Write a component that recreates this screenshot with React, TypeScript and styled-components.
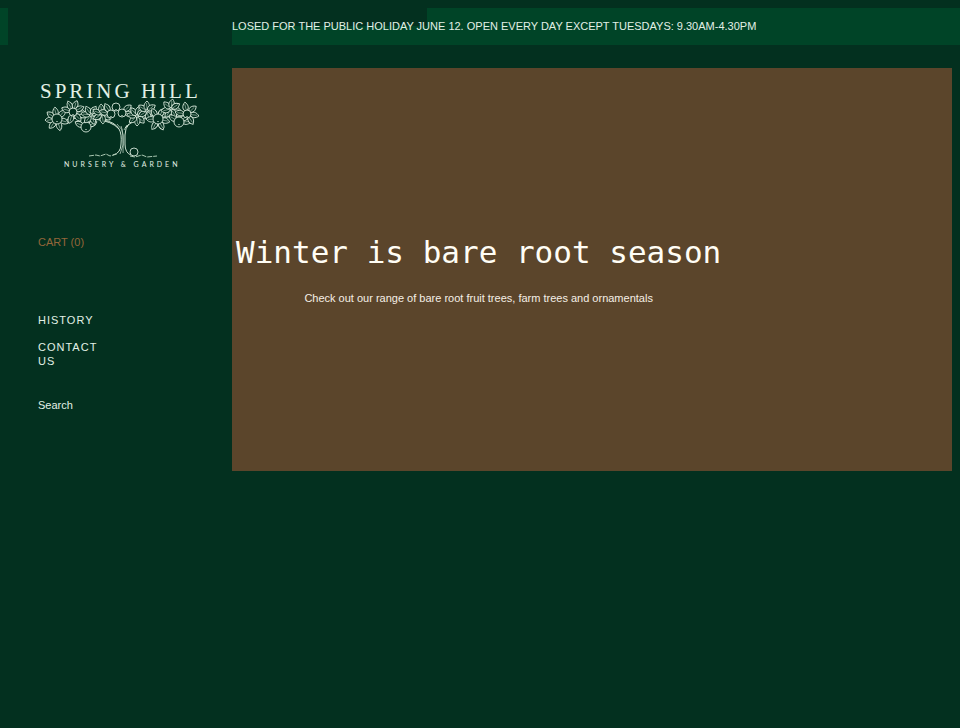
import React from "react";
import styled, { createGlobalStyle } from "styled-components";

const GlobalStyle = createGlobalStyle`
  * { box-sizing: border-box; }
  body {
    margin: 0;
    background: #03301f;
    color: #e2f0e6;
    font-family: "Liberation Sans", Arial, Helvetica, sans-serif;
    font-size: 11px;
  }
`;

const Page = styled.div`
  display: grid;
  grid-template-columns: 8px 224px minmax(0, 1fr);
  padding-top: 8px;
  min-height: 100vh;
`;

const Edge = styled.div`
  height: 37px;
  background: #004427;
`;

const Sidebar = styled.aside`
  display: flex;
  flex-direction: column;
  align-items: flex-start;
  padding: 70px 30px 0;
`;

const LogoLink = styled.a`
  display: block;
  height: 96px;
`;

const CartLink = styled.a`
  margin-top: 62px;
  color: #94663a;
  line-height: 12px;
  text-decoration: none;
`;

const Nav = styled.nav`
  display: flex;
  flex-direction: column;
  gap: 13px;
  width: 64px;
  margin-top: 65px;
`;

const NavLink = styled.a`
  color: inherit;
  line-height: 14px;
  letter-spacing: 1px;
  text-decoration: none;
`;

const SearchLink = styled.a`
  margin-top: 31px;
  color: inherit;
  line-height: 12px;
  text-decoration: none;
`;

const Content = styled.div`
  display: flex;
  flex-direction: column;
  gap: 23px;
`;

const Announcement = styled.div`
  height: 37px;
  background: linear-gradient(#03301f, #03301f) 0 0 / 195px 18px no-repeat, #004427;
  line-height: 37px;
  white-space: nowrap;
`;

const Hero = styled.main`
  margin-right: 8px;
  padding: 166px 0;
  background: #5b452b;
`;

const HeroCopy = styled.div`
  width: max-content;
  max-width: 100%;
  margin-left: 4px;
  text-align: center;
`;

const Title = styled.h1`
  margin: 0;
  color: #fffdf5;
  font: 400 31px/36px "DejaVu Sans Mono", monospace;
`;

const Lead = styled.p`
  margin: 21px 0 0;
  color: #f5efe6;
  line-height: 14px;
`;

const clusters = [
  { x: 19, y: 41, r: 5, leaves: [20, 75, 130, 175, 215, 260, 315] },
  { x: 35, y: 34, r: 4, leaves: [0, 50, 110, 200, 245, 290, 335] },
  { x: 48, y: 49, r: 5, leaves: [205, 335] },
  { x: 53, y: 37, r: 0, leaves: [10, 70, 130, 190, 240, 300] },
  { x: 64, y: 36, r: 0, leaves: [35, 85, 150, 205, 265, 320] },
  { x: 73, y: 36, r: 4, leaves: [195, 240] },
  { x: 78, y: 29, r: 4, leaves: [] },
  { x: 84, y: 35, r: 4, leaves: [320, 10] },
  { x: 99, y: 38, r: 0, leaves: [0, 45, 90, 140, 190, 235, 285, 325] },
  { x: 109, y: 33, r: 0, leaves: [20, 80, 150, 215, 270, 325] },
  { x: 120, y: 41, r: 5, leaves: [15, 65, 120, 180, 240, 300] },
  { x: 133, y: 31, r: 0, leaves: [10, 60, 125, 170, 225, 280, 330] },
  { x: 141, y: 44, r: 5, leaves: [0, 215, 325] },
  { x: 149, y: 36, r: 4, leaves: [10, 60, 190, 260, 320] },
];

function Logo() {
  return (
    <svg width="164" height="96" viewBox="0 0 164 96" role="img" aria-label="Spring Hill Nursery and Garden">
      <text x="2" y="20" fill="#e2f0e6" fontFamily="Liberation Serif" fontSize="21" letterSpacing="3">SPRING HILL</text>
      <g fill="none" stroke="#cfe3d3">
        <path d="M28 42Q43 38 56 41Q74 43 81 51M44 40L35 34M64 42L64 36M87 50Q94 42 105 41Q124 38 148 39M107 40L110 33M128 39L133 31" />
        <path d="M65 42Q77 44 81 51Q84 56 83 66Q83 75 75 77M91 46Q87 50 87 57V66Q87 75 93 77" />
        <path d="M83 48Q86 54 85 75M79 46Q85 51 85 57V67L82 76M89 47L86 52" strokeWidth=".7" />
      </g>
      <g fill="#03301f" stroke="#d7e8da" strokeWidth=".9">
        {clusters.map(({ x, y, r, leaves }) => (
          <g key={`${x}-${y}`} transform={`translate(${x} ${y})`}>
            {leaves.map((angle) => (
              <g key={angle} transform={`rotate(${angle}) translate(${r ? 3 : 1} 0)`}>
                <path d="M0 0C1 -4 6 -4 9 0C6 3 2 3.5 0 0Z" />
                <path d="M1 0L7 -.5" strokeWidth=".5" />
              </g>
            ))}
            {r > 0 && <circle r={r} />}
            {r > 0 && <path d="M-1 2L0 3L1 2" strokeWidth=".6" />}
          </g>
        ))}
        <circle cx="96" cy="74" r="4" />
      </g>
      <path d="M51 78L58 77L62 78L68 76L72 78L79 76M92 78L97 79L104 77L109 79L119 78" fill="none" stroke="#aac8b2" strokeDasharray="5 1" />
      <text x="26" y="89" fill="#e2f0e6" fontFamily="Lato" fontSize="7" fontWeight="400" letterSpacing="3">NURSERY &amp; GARDEN</text>
    </svg>
  );
}

export default function App() {
  return (
    <>
      <GlobalStyle />
      <Page>
        <Edge />
        <Sidebar>
          <LogoLink href="#"><Logo /></LogoLink>
          <CartLink href="#cart">CART (0)</CartLink>
          <Nav aria-label="Main">
            <NavLink href="#history">HISTORY</NavLink>
            <NavLink href="#contact">CONTACT US</NavLink>
          </Nav>
          <SearchLink href="#search">Search</SearchLink>
        </Sidebar>
        <Content>
          <Announcement>LOSED FOR THE PUBLIC HOLIDAY JUNE 12. OPEN EVERY DAY EXCEPT TUESDAYS: 9.30AM-4.30PM</Announcement>
          <Hero>
            <HeroCopy>
              <Title>Winter is bare root season</Title>
              <Lead>Check out our range of bare root fruit trees, farm trees and ornamentals</Lead>
            </HeroCopy>
          </Hero>
        </Content>
      </Page>
    </>
  );
}
